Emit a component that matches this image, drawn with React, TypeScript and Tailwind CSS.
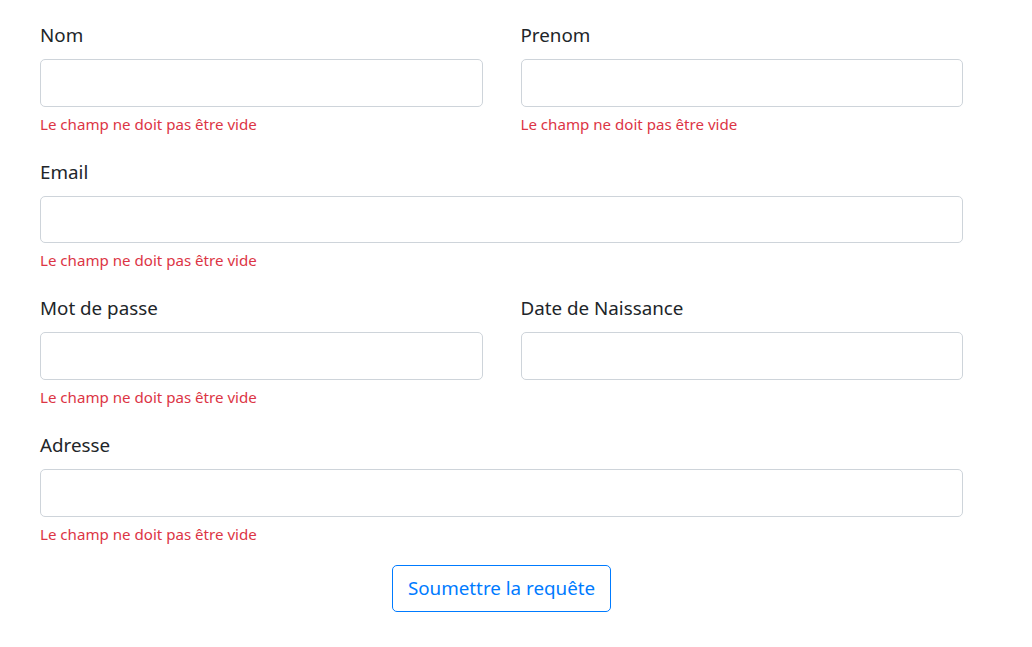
import React from 'react';

const FONT = "font-['Segoe_UI','Noto_Sans','Liberation_Sans',sans-serif]";

function Field({ label, error = true, type = 'text' }: { label: string; error?: boolean; type?: string }) {
  return (
    <div className="mb-[21.2px]">
      <label className="block text-[18.8px] leading-[30px] text-[#212529] mb-[9px]">{label}</label>
      <input
        type={type}
        className="block w-full h-[47.5px] rounded-[5px] border border-[#ced4da] bg-white px-[15px] text-[18.8px] outline-none"
      />
      {error && (
        <div className="mt-[5px] text-[15.1px] leading-[24px] text-[#dc3545]">Le champ ne doit pas être vide</div>
      )}
    </div>
  );
}

export default function App() {
  return (
    <div className={`${FONT} min-h-screen bg-white pt-[20px] pl-[40px]`}>
      <form className="w-[923px]">
        <div className="grid grid-cols-2 gap-x-[38px]">
          <Field label="Nom" />
          <Field label="Prenom" />
        </div>
        <Field label="Email" type="email" />
        <div className="grid grid-cols-2 gap-x-[38px]">
          <Field label="Mot de passe" type="password" />
          <Field label="Date de Naissance" error={false} />
        </div>
        <Field label="Adresse" />
        <div className="flex justify-center -mt-[2px]">
          <button
            type="button"
            className="rounded-[5px] border border-[#007bff] px-[15px] py-[7.5px] text-[18.8px] leading-[30px] text-[#007bff] bg-white"
          >
            Soumettre la requête
          </button>
        </div>
      </form>
    </div>
  );
}
